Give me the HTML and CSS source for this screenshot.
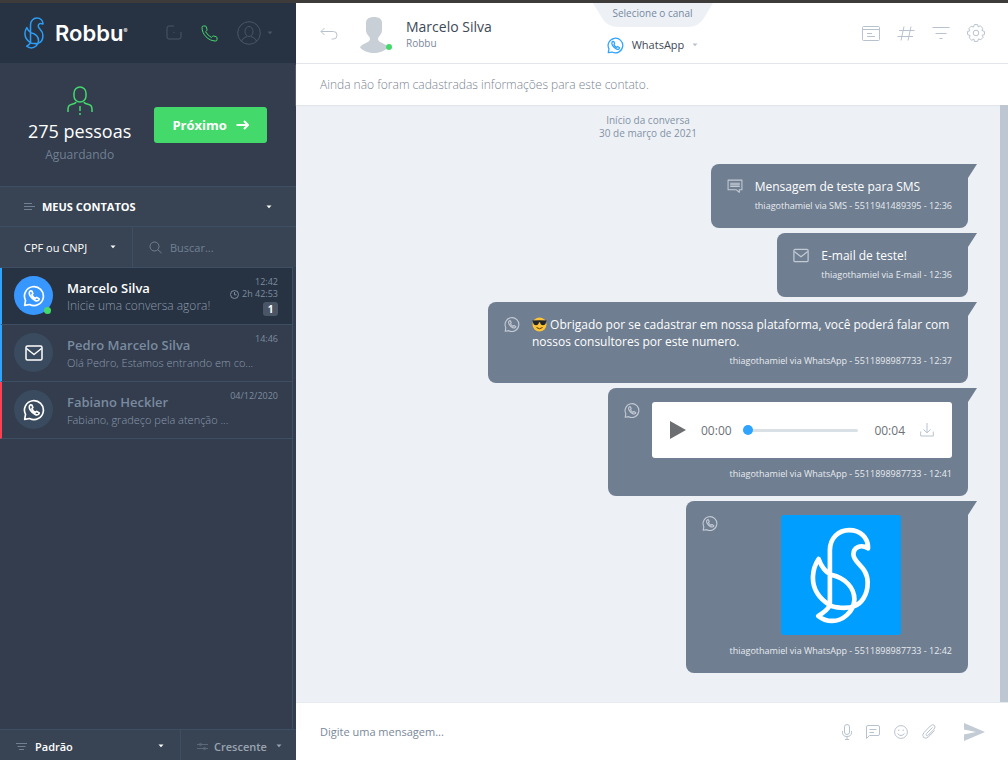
FILE: index.html
```html
<!DOCTYPE html>
<html lang="pt-BR">
<head>
    <meta charset="UTF-8">
    <meta name="viewport" content="width=device-width, initial-scale=1.0">
    <title>Robbu</title>
    <link rel="stylesheet" href="styles.css">
</head>
<body>
    <svg class="sprite" aria-hidden="true">
        <symbol id="bird" viewBox="88 42 184 292">
            <path d="M148 278V112C148 76 174 51 206 51C240 51 264 74 263 106C240 92 219 104 219 124C219 152 262 160 262 210C262 250 240 274 222 280C200 290 160 285 148 278C112 255 95 225 97 190C98 165 106 150 114 138C122 160 135 178 152 186C195 196 222 225 222 260C220 300 185 325 155 325C140 325 125 320 113 310C130 300 142 290 148 278"/>
        </symbol>
        <symbol id="whatsapp" viewBox="0 0 20 20">
            <path d="M1.5 18.5L2.3 14A8.6 8.6 0 1 1 6 17.7Z"/>
            <path d="M7 5.2C5.400 6 5.300 7.800 6.500 9.800C7.800 12 9.400 13.400 11.400 14.200C13.200 14.900 14.500 14 14.800 12.700L12.500 11.200L11.300 12.200C9.900 11.600 8.800 10.400 8.100 8.900L9 7.700L8 5.400Z"/>
        </symbol>
        <symbol id="mail" viewBox="0 0 18 16">
            <rect x="1" y="1" width="16" height="14" rx="1.500"/>
            <path d="M1.500 3.500L9 9.500L16.500 3.500"/>
        </symbol>
        <symbol id="caret" viewBox="0 0 6 4">
            <path d="M0.500 0.500H5.500L3 3.200Z"/>
        </symbol>
    </svg>

    <div class="app">
        <aside class="sidebar">
            <header class="brand">
                <svg class="icon brand-bird"><use href="#bird"/></svg>
                <span class="brand-name">Robbu<sup>®</sup></span>
                <nav class="brand-actions">
                    <button type="button" class="icon-button muted" aria-label="Painel">
                        <svg class="icon" width="16" height="16" viewBox="0 0 16 16"><path d="M8 1H3Q1 1 1 3V12Q1 14 3 14H13Q15 14 15 12V7M8 7V8"/></svg>
                    </button>
                    <button type="button" class="icon-button phone" aria-label="Telefone">
                        <svg class="icon" width="17" height="17" viewBox="0 0 17 17"><path d="M1 2.200Q1.200 1 2.500 1H4.200Q5.200 1 5.400 2L6 4.500Q6.200 5.300 5.500 5.900L4.600 6.700Q6.800 10.600 10.400 12.400L11.300 11.500Q11.900 10.800 12.700 11L15.100 11.700Q16 12 16 12.900V14.500Q16 16 14.700 16C7.200 16 1 9.400 1 2.200Z"/></svg>
                    </button>
                    <button type="button" class="icon-button muted profile" aria-label="Perfil">
                        <svg class="icon" width="24" height="24" viewBox="0 0 24 24"><circle cx="12" cy="12" r="11.300"/><ellipse cx="12" cy="10.500" rx="4" ry="5"/><path d="M4.500 20Q6 16.500 10 15.500M14 15.500Q18 16.500 19.500 20"/></svg>
                        <svg class="caret"><use href="#caret"/></svg>
                    </button>
                </nav>
            </header>

            <section class="queue">
                <div class="queue-info">
                    <svg class="icon" width="26" height="29" viewBox="0 0 26 29"><rect x="7" y="1" width="12" height="15" rx="6"/><path d="M1 26V23Q1 19 5 18.200Q8.500 17.500 9 16M17 16Q17.500 17.500 21 18.200Q25 19 25 23V26M13 20V25M13 27V29"/></svg>
                    <strong>275 pessoas</strong>
                    <span>Aguardando</span>
                </div>
                <button type="button" class="next">
                    Próximo
                    <svg class="icon" width="13" height="10" viewBox="0 0 13 10"><path d="M0.500 5H12M8 1L12 5L8 9"/></svg>
                </button>
            </section>

            <button type="button" class="contacts-title">
                <svg class="icon" width="11" height="9" viewBox="0 0 11 9"><path d="M0 1.500H8M0 4.500H11M0 7.500H8"/></svg>
                MEUS CONTATOS
                <svg class="caret"><use href="#caret"/></svg>
            </button>

            <div class="filters">
                <label class="picker">
                    <select aria-label="Tipo de busca"><option>CPF ou CNPJ</option></select>
                    <svg class="caret"><use href="#caret"/></svg>
                </label>
                <label class="search">
                    <svg class="icon" width="13" height="13" viewBox="0 0 13 13"><circle cx="5.500" cy="5.500" r="4.500"/><path d="M8.800 8.800L12.500 12"/></svg>
                    <input type="text" placeholder="Buscar..." aria-label="Buscar">
                </label>
            </div>

            <ul class="contacts">
                <li class="contact active">
                    <span class="avatar online"><svg class="icon" width="22" height="22"><use href="#whatsapp"/></svg></span>
                    <div class="contact-text">
                        <h2>Marcelo Silva</h2>
                        <p>Inicie uma conversa agora!</p>
                    </div>
                    <div class="contact-time">
                        <span>12:42</span>
                        <span><svg class="icon" width="9" height="9" viewBox="0 0 9 9"><circle cx="4.500" cy="4.500" r="4"/><path d="M4.500 2V4.800H6.500"/></svg>2h 42:53</span>
                        <b class="count">1</b>
                    </div>
                </li>
                <li class="contact">
                    <span class="avatar"><svg class="icon" width="18" height="16"><use href="#mail"/></svg></span>
                    <div class="contact-text">
                        <h2>Pedro Marcelo Silva</h2>
                        <p class="small">Olá Pedro, Estamos entrando em co...</p>
                    </div>
                    <div class="contact-time"><span>14:46</span></div>
                </li>
                <li class="contact late">
                    <span class="avatar"><svg class="icon" width="22" height="22"><use href="#whatsapp"/></svg></span>
                    <div class="contact-text">
                        <h2>Fabiano Heckler</h2>
                        <p class="small">Fabiano, gradeço pela atenção ...</p>
                    </div>
                    <div class="contact-time"><span>04/12/2020</span></div>
                </li>
            </ul>

            <footer class="sorting">
                <label class="picker order">
                    <svg class="icon" width="11" height="9" viewBox="0 0 11 9"><path d="M0 1.500H11M1.500 4.500H9.500M3 7.500H8"/></svg>
                    <select aria-label="Ordenação"><option>Padrão</option></select>
                    <svg class="caret"><use href="#caret"/></svg>
                </label>
                <label class="picker direction">
                    <svg class="icon" width="11" height="9" viewBox="0 0 11 9"><path d="M0 2.500H11M0 6.500H11"/><circle cx="3.500" cy="2.500" r="1.200"/><circle cx="7.500" cy="6.500" r="1.200"/></svg>
                    <select aria-label="Direção"><option>Crescente</option></select>
                    <svg class="caret"><use href="#caret"/></svg>
                </label>
            </footer>
        </aside>

        <main class="chat">
            <header class="chat-header">
                <div class="person">
                    <button type="button" class="icon-button" aria-label="Voltar">
                        <svg class="icon" width="18" height="13" viewBox="0 0 18 13"><path d="M4.500 1L1 4.500L4.500 8M1 4.500H13.500Q17 4.500 17 8.200Q17 12 13.500 12H11.500"/></svg>
                    </button>
                    <span class="photo">
                        <svg width="28" height="36" viewBox="0 0 28 36"><path d="M14 0C19 0 22 2 22 6V13C22 18 18 19 18 22C18 26 26 26 28 30.500C24 34.500 19 36 14 36S4 34.500 0 30.500C2 26 10 26 10 22C10 19 6 18 6 13V6C6 2 9 0 14 0Z"/></svg>
                    </span>
                    <div>
                        <h1>Marcelo Silva</h1>
                        <p>Robbu</p>
                    </div>
                </div>
                <div class="channel">
                    <div class="channel-tab">
                        <svg width="120" height="24" viewBox="0 0 120 24"><path d="M0 0L9 15Q14 24 26 24H94Q106 24 111 15L120 0Z"/></svg>
                        <span>Selecione o canal</span>
                    </div>
                    <button type="button" class="channel-current">
                        <svg class="icon" width="17" height="17"><use href="#whatsapp"/></svg>
                        WhatsApp
                        <svg class="caret"><use href="#caret"/></svg>
                    </button>
                </div>
                <nav class="tools">
                    <button type="button" class="icon-button" aria-label="Cartão">
                        <svg class="icon" width="18" height="15" viewBox="0 0 18 15"><rect x="0.500" y="0.500" width="17" height="14" rx="1"/><path d="M1 3.500H17M5 7.500H10M5 10.500H13"/></svg>
                    </button>
                    <button type="button" class="icon-button" aria-label="Etiquetas">
                        <svg class="icon" width="18" height="15" viewBox="0 0 18 15"><path d="M7 0.500L4 14.500M14 0.500L11 14.500M2 4.500H17.500M0.500 10.500H16"/></svg>
                    </button>
                    <button type="button" class="icon-button" aria-label="Filtrar">
                        <svg class="icon" width="18" height="14" viewBox="0 0 18 14"><path d="M0.500 1.500H17.500M3.500 7.500H14.500M7.500 12.500H10.500"/></svg>
                    </button>
                    <button type="button" class="icon-button" aria-label="Configurações">
                        <svg class="icon" width="18" height="18" viewBox="0 0 18 18"><circle cx="9" cy="9" r="2.800"/><path d="M7.400 0.600H10.600L11.200 2.900L13.200 1.800L15.800 4.200L14.900 6.500L17.400 7.400V10.600L15.100 11.200L16.200 13.300L13.800 15.800L11.500 14.900L10.600 17.400H7.400L6.800 15.100L4.700 16.200L2.200 13.800L3.100 11.500L0.600 10.600V7.400L2.900 6.800L1.800 4.700L4.200 2.200L6.500 3.100Z"/></svg>
                    </button>
                </nav>
            </header>

            <p class="notice">Ainda não foram cadastradas informações para este contato.</p>

            <div class="history">
                <div class="messages">
                    <p class="started">Início da conversa<br>30 de março de 2021</p>

                    <article class="bubble">
                        <svg class="icon thin" viewBox="0 0 15 13"><path d="M1 0.500H14V9.500H11.500V12L8.500 9.500H1ZM3 3.500H12M3 5H12M3 6.500H12"/></svg>
                        <div class="bubble-body">
                            <p>Mensagem de teste para SMS</p>
                            <small>thiagothamiel via SMS - 5511941489395 - 12:36</small>
                        </div>
                    </article>

                    <article class="bubble">
                        <svg class="icon"><use href="#mail"/></svg>
                        <div class="bubble-body">
                            <p>E-mail de teste!</p>
                            <small>thiagothamiel via E-mail - 12:36</small>
                        </div>
                    </article>

                    <article class="bubble">
                        <svg class="icon"><use href="#whatsapp"/></svg>
                        <div class="bubble-body">
                            <p><svg class="emoji" width="15" height="15" viewBox="0 0 15 15"><circle cx="7.500" cy="7.500" r="7" fill="#fbc23a"/><path d="M0.300 3.500Q7.500 2.800 14.700 3.500L14 5Q13.500 8.300 11 8.300Q8.500 8.300 8 5.300H7Q6.500 8.300 4 8.300Q1.500 8.300 1 5Z" fill="#20242b"/><path d="M4.500 10.500Q7.500 13 10.500 10.500" fill="none" stroke="#5b3a10"/></svg> Obrigado por se cadastrar em nossa plataforma, você poderá falar com nossos consultores por este numero.</p>
                            <small>thiagothamiel via WhatsApp - 5511898987733 - 12:37</small>
                        </div>
                    </article>

                    <article class="bubble">
                        <svg class="icon"><use href="#whatsapp"/></svg>
                        <div class="bubble-body">
                            <div class="player">
                                <button type="button" class="icon-button play" aria-label="Reproduzir">
                                    <svg width="16" height="18" viewBox="0 0 16 18"><path d="M0 0L16 9L0 18Z"/></svg>
                                </button>
                                <span>00:00</span>
                                <input type="range" min="0" max="4" value="0" aria-label="Posição do áudio">
                                <span>00:04</span>
                                <button type="button" class="icon-button" aria-label="Baixar">
                                    <svg class="icon" width="14" height="14" viewBox="0 0 14 14"><path d="M7 0V9.500M3.500 6.500L7 9.800L10.500 6.500M0.700 8.500V13H13.300V8.500"/></svg>
                                </button>
                            </div>
                            <small>thiagothamiel via WhatsApp - 5511898987733 - 12:41</small>
                        </div>
                    </article>

                    <article class="bubble">
                        <svg class="icon"><use href="#whatsapp"/></svg>
                        <div class="bubble-body">
                            <div class="picture"><svg class="icon" width="61" height="97"><use href="#bird"/></svg></div>
                            <small>thiagothamiel via WhatsApp - 5511898987733 - 12:42</small>
                        </div>
                    </article>
                </div>
                <div class="scrollbar"></div>
            </div>

            <form class="composer">
                <input type="text" placeholder="Digite uma mensagem..." aria-label="Mensagem">
                <button type="button" class="icon-button" aria-label="Gravar áudio">
                    <svg class="icon" width="10" height="16" viewBox="0 0 10 16"><rect x="2.500" y="0.500" width="5" height="10" rx="2.500"/><path d="M0.500 7V8.500Q0.500 12.500 5 12.500T9.500 8.500V7M5 12.500V15M3 15.500H7"/></svg>
                </button>
                <button type="button" class="icon-button" aria-label="Mensagens prontas">
                    <svg class="icon" width="14" height="14" viewBox="0 0 14 14"><path d="M0.500 13.500V2Q0.500 0.500 2 0.500H12Q13.500 0.500 13.500 2V9Q13.500 10.500 12 10.500H3.500ZM3.500 4.500H10.500M3.500 7.500H8"/></svg>
                </button>
                <button type="button" class="icon-button" aria-label="Emojis">
                    <svg class="icon" width="14" height="14" viewBox="0 0 14 14"><circle cx="7" cy="7" r="6.400"/><path d="M4.800 4.500V6M9.200 4.500V6M3.500 8.500Q7 12.500 10.500 8.500"/></svg>
                </button>
                <button type="button" class="icon-button" aria-label="Anexar">
                    <svg class="icon" width="14" height="15" viewBox="0 0 14 15"><path d="M10.500 3.500L4.500 9.500Q3.500 10.800 4.500 11.500Q5.500 12.200 6.500 11L12 5.200Q14 2.800 12.300 1.300Q10.500 -0.200 8.300 2L2 8.500Q-0.500 11.300 1.700 13.500Q4 15.300 6.500 12.800L12.500 6.500"/></svg>
                </button>
                <button type="submit" class="icon-button send" aria-label="Enviar">
                    <svg width="21" height="18" viewBox="0 0 21 18"><path d="M0 0L21 9L0 18V11.500L12 9L0 6.500Z"/></svg>
                </button>
            </form>
        </main>
    </div>
</body>
</html>
```
FILE: styles.css
```css
* {
    box-sizing: border-box;
}
body {
    margin: 0;
    font-family: "Open Sans", sans-serif;
    font-size: 13px;
    color: #fff;
}
h1, h2, p, ul {
    margin: 0;
    padding: 0;
}
button, input, select {
    font: inherit;
    color: inherit;
    background: none;
    border: none;
    padding: 0;
    margin: 0;
    outline: none;
}
button {
    cursor: pointer;
}
select {
    appearance: none;
    flex: 1;
    min-width: 0;
}
svg {
    display: block;
    flex-shrink: 0;
}
.sprite {
    position: absolute;
    width: 0;
    height: 0;
}
.icon {
    fill: none;
    stroke: currentColor;
    stroke-width: 1;
    stroke-linejoin: round;
}
.caret {
    width: 6px;
    height: 4px;
    fill: currentColor;
}
.icon-button {
    display: flex;
    align-items: center;
    color: #b8c2ce;
}
.app {
    display: flex;
    height: 100vh;
    border-top: 3px solid #3e3b3b;
}

/* Sidebar */
.sidebar {
    display: flex;
    flex-direction: column;
    width: 296px;
    flex-shrink: 0;
    background: #333d4d;
}
.brand {
    display: flex;
    align-items: center;
    height: 60px;
    padding: 0 23px 0 24px;
    background: #273342;
}
.brand-bird {
    width: 20px;
    height: 32px;
    color: #2c9cf5;
    stroke-width: 14;
}
.brand-name {
    margin-left: 11px;
    font-family: Inter, sans-serif;
    font-size: 22px;
    font-weight: 600;
}
.brand-name sup {
    font-size: 6px;
    vertical-align: 8px;
    line-height: 1;
}
.brand-actions {
    display: flex;
    align-items: center;
    margin-left: auto;
    gap: 19px;
}
.brand-actions .muted {
    color: #4a5666;
}
.brand-actions .phone {
    color: #44d96b;
}
.profile {
    gap: 6px;
}
.queue {
    display: flex;
    align-items: center;
    height: 123px;
    padding: 0 29px 0 28px;
    gap: 23px;
}
.queue-info {
    display: flex;
    flex-direction: column;
    align-items: center;
    color: #44d96b;
}
.queue-info .icon {
    stroke-width: 1.5;
}
.queue-info strong {
    margin-top: 4px;
    font-size: 18px;
    font-weight: 400;
    line-height: 24px;
    color: #fff;
    white-space: nowrap;
}
.queue-info span {
    margin-top: 4px;
    font-size: 12px;
    line-height: 16px;
    color: #718093;
}
.next {
    display: flex;
    align-items: center;
    justify-content: center;
    gap: 9px;
    flex: 1;
    height: 36px;
    border-radius: 3px;
    background: #44d96b;
    font-weight: 700;
}
.next .icon {
    stroke-width: 2;
}
.contacts-title {
    display: flex;
    align-items: center;
    gap: 7px;
    height: 40px;
    padding: 0 24px;
    border-top: 1px solid #3d4f65;
    background: #384454;
    font-size: 11px;
    font-weight: 700;
}
.contacts-title .icon {
    color: #718093;
}
.contacts-title .caret {
    margin-left: auto;
}
.filters {
    display: flex;
    height: 41px;
    border-top: 1px solid #3d4f65;
    background: #384454;
    font-size: 11px;
}
.picker {
    display: flex;
    align-items: center;
    flex-shrink: 0;
}
.filters .picker {
    width: 133px;
    padding: 0 16px 0 24px;
    border-right: 1px solid #3d4f65;
}
.search {
    display: flex;
    align-items: center;
    flex: 1;
    min-width: 0;
    gap: 8px;
    padding-left: 16px;
    color: #718093;
}
.search input {
    flex: 1;
    min-width: 0;
}
input::placeholder {
    color: inherit;
    opacity: 1;
}
.contacts {
    flex: 1;
    list-style: none;
    margin-right: 3px;
    border-top: 1px solid #3d4f65;
    border-right: 1px solid #3d4f65;
}
.contact {
    display: flex;
    height: 57px;
    padding: 8px 14px 0 12px;
    border-left: 2px solid #2fa4ff;
    border-bottom: 1px solid #3d4f65;
    color: #7a8ba0;
}
.contact.active {
    background: #273342;
}
.contact.late {
    border-left-color: #ff4053;
}
.avatar {
    position: relative;
    display: flex;
    align-items: center;
    justify-content: center;
    width: 39px;
    height: 39px;
    border-radius: 50%;
    background: #3a4b5f;
    color: #fff;
}
.avatar .icon {
    stroke-width: 1.5;
}
.active .avatar {
    background: #3897ff;
}
.online::after, .photo::after {
    content: "";
    position: absolute;
    right: 2px;
    bottom: 1px;
    width: 7px;
    height: 7px;
    border-radius: 50%;
    background: #44d96b;
}
.contact-text {
    flex: 1;
    margin-left: 14px;
    white-space: nowrap;
}
.contact-text h2 {
    margin-top: 3px;
    font-size: 13px;
    font-weight: 600;
    line-height: 18px;
}
.active h2 {
    color: #fff;
}
.contact-text p {
    font-size: 12px;
    font-weight: 300;
    line-height: 18px;
    color: #8b9aad;
}
.contact-text .small {
    font-size: 11px;
}
.contact-time {
    display: flex;
    flex-direction: column;
    align-items: flex-end;
    width: 50px;
    margin-left: -50px;
    font-size: 9px;
    line-height: 12px;
    color: #7d8ca0;
    white-space: nowrap;
}
.contact-time span {
    display: flex;
    align-items: center;
    gap: 3px;
}
.count {
    width: 15px;
    margin-top: 2px;
    border-radius: 3px;
    background: #4a5666;
    font-size: 10px;
    line-height: 14px;
    text-align: center;
    color: #fff;
}
.sorting {
    display: flex;
    height: 31px;
    border-top: 1px solid #3d4f65;
    background: #384454;
    font-size: 11px;
    font-weight: 600;
}
.sorting .picker {
    gap: 8px;
    padding: 2px 16px 0;
}
.sorting .icon {
    color: #718093;
}
.sorting .order {
    width: 181px;
    border-right: 1px solid #3d4f65;
}
.sorting .direction {
    flex: 1;
    gap: 6px;
    min-width: 0;
    padding-right: 14px;
    color: #9aa4b0;
}
.direction .icon {
    opacity: 0.6;
}

/* Chat */
.chat {
    display: flex;
    flex-direction: column;
    flex: 1;
    min-width: 0;
    background: #edf1f6;
}
.chat-header {
    display: flex;
    height: 61px;
    padding: 0 23px 0 24px;
    border-bottom: 1px solid #e2e6eb;
    background: #fff;
}
.person, .tools {
    display: flex;
    align-items: center;
    flex: 1;
}
.photo {
    position: relative;
    margin: 4px 14px 0 22px;
    padding-right: 4px;
    fill: #c8cfd6;
}
.photo::after {
    right: 0;
    bottom: 3px;
    width: 6px;
    height: 6px;
}
.person h1 {
    margin-top: 2px;
    font-size: 14px;
    font-weight: 400;
    line-height: 18px;
    color: #3e4856;
}
.person p {
    font-size: 10px;
    line-height: 14px;
    color: #7a889a;
}
.channel {
    display: flex;
    flex-direction: column;
    align-items: center;
    gap: 9px;
}
.channel-tab {
    position: relative;
    fill: #edf1f6;
}
.channel-tab span {
    position: absolute;
    top: 0;
    left: 0;
    width: 100%;
    font-size: 10px;
    line-height: 21px;
    text-align: center;
    color: #7688a0;
}
.channel-current {
    display: flex;
    align-items: center;
    gap: 8px;
    font-size: 11px;
    line-height: 18px;
    color: #3e4856;
}
.channel-current .icon {
    color: #2fa4ff;
    stroke-width: 1.5;
}
.channel-current .caret {
    color: #b8c2ce;
}
.tools {
    justify-content: flex-end;
    gap: 17px;
}
.notice {
    height: 41px;
    padding: 0 24px;
    font-size: 12px;
    font-weight: 300;
    line-height: 41px;
    background: #fff;
    color: #7a8492;
    box-shadow: 0 1px 1px #e2e6eb;
}
.history {
    display: flex;
    flex: 1;
    min-height: 0;
}
.messages {
    display: flex;
    flex-direction: column;
    align-items: flex-end;
    flex: 1;
    gap: 5px;
    padding: 9px 32px 0;
    overflow: hidden;
}
.scrollbar {
    width: 8px;
    background: #bdc6d1;
}
.started {
    align-self: center;
    margin-bottom: 19px;
    font-size: 10px;
    line-height: 13px;
    text-align: center;
    color: #8492a5;
}
.bubble {
    position: relative;
    display: flex;
    flex-shrink: 0;
    gap: 12px;
    max-width: 480px;
    padding: 14px 16px 15px;
    border-radius: 8px 0 8px 8px;
    background: #6f7e91;
}
.bubble::after {
    content: "";
    position: absolute;
    top: 0;
    left: 100%;
    width: 9px;
    height: 14px;
    background: #6f7e91;
    clip-path: polygon(0 0, 100% 0, 0 100%);
}
.bubble > .icon {
    width: 16px;
    height: 17px;
    color: #c3cad4;
    stroke-width: 1.4;
}
.bubble > .thin {
    stroke-width: 1;
}
.bubble-body {
    display: flex;
    flex-direction: column;
    align-items: flex-end;
    gap: 4px;
}
.bubble-body p {
    align-self: flex-start;
    font-size: 12px;
    line-height: 17px;
}
.bubble-body small {
    font-size: 9px;
    line-height: 14px;
    color: #e8ebef;
}
.emoji {
    display: inline-block;
    vertical-align: -3px;
}
.player {
    display: flex;
    align-items: center;
    width: 300px;
    height: 56px;
    padding: 0 18px;
    margin-bottom: 5px;
    border-radius: 3px;
    background: #fff;
    font-size: 12px;
    color: #6d7178;
    gap: 15px;
}
.play {
    fill: #6d6e71;
}
.player input {
    appearance: none;
    flex: 1;
    min-width: 0;
    height: 10px;
    margin: 0 1px 0 -4px;
}
.player input::-webkit-slider-runnable-track {
    height: 3px;
    border-radius: 2px;
    background: #d9e1e7;
}
.player input::-webkit-slider-thumb {
    appearance: none;
    width: 10px;
    height: 10px;
    margin-top: -4px;
    border-radius: 50%;
    background: #2fa4ff;
}
.picture {
    display: flex;
    align-items: center;
    justify-content: center;
    align-self: center;
    width: 120px;
    height: 120px;
    margin-bottom: 5px;
    border-radius: 3px;
    background: #009fff;
}
.picture .icon {
    stroke-width: 14;
}
.composer {
    display: flex;
    align-items: center;
    gap: 14px;
    height: 58px;
    padding: 0 23px 0 24px;
    border-top: 1px solid #e6eaf0;
    background: #fff;
}
.composer input {
    flex: 1;
    min-width: 0;
    font-size: 11px;
    color: #7a889a;
}
.send {
    margin-left: 14px;
    fill: #c3cbd4;
}
```
